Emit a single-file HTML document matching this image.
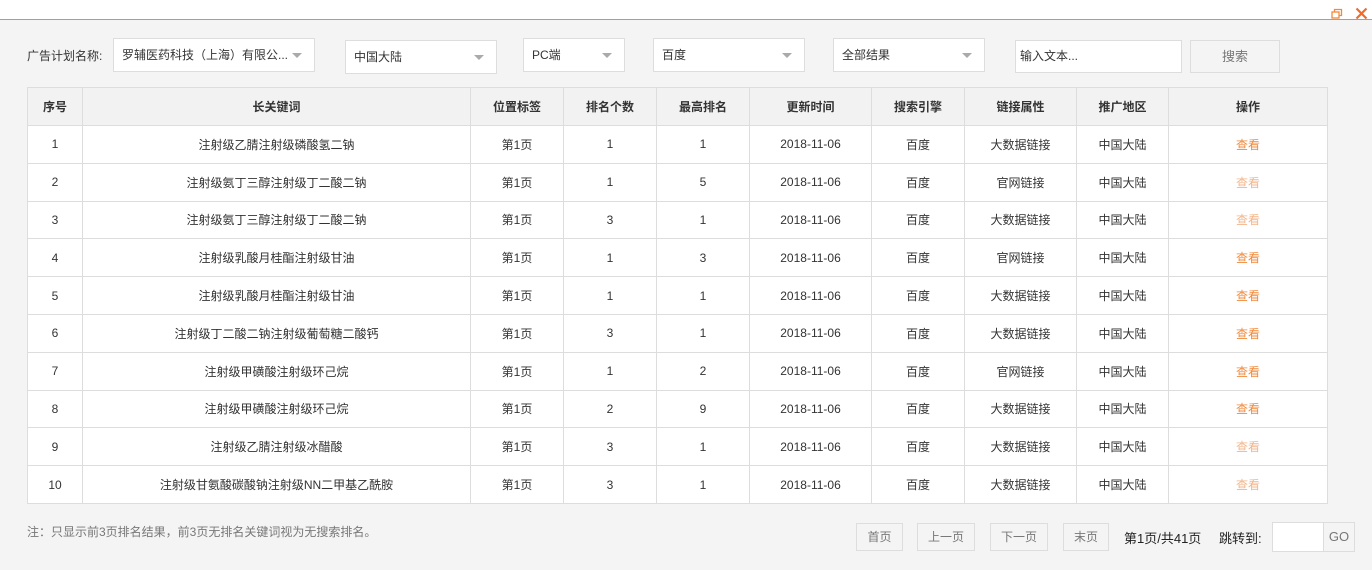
<!DOCTYPE html>
<html><head><meta charset="utf-8"><style>
*{box-sizing:border-box;margin:0;padding:0}
body{width:1372px;height:570px;background:#f4f4f4;font-family:"Liberation Sans","Noto Sans CJK SC",sans-serif;font-size:12px;color:#333;position:relative;overflow:hidden}
.top{position:absolute;left:0;top:0;width:1372px;height:19px;background:#fff}
.line{position:absolute;left:0;top:19px;width:1372px;height:1px;background:#f08a3c}
.abs{position:absolute}
.sel{position:absolute;background:#fff;border:1px solid #ddd;height:34px;line-height:32px;padding-left:8px;font-size:12px;color:#333}
.sel:after{content:"";position:absolute;right:12px;top:14px;border-left:5px solid transparent;border-right:5px solid transparent;border-top:5px solid #aaa}
table{position:absolute;left:27px;top:87px;border-collapse:collapse;background:#fff;width:1301px}
td,th{border:1px solid #ddd;text-align:center;height:37.8px;font-size:12px;font-weight:normal;color:#333;padding:0}
th{background:#f2f2f2;font-weight:bold;height:38px}
.o{color:#f08a3c}.f{color:#f3b58b}
.pb{position:absolute;top:523px;height:28px;line-height:26px;border:1px solid #ddd;text-align:center;color:#777;background:#f4f4f4}
</style></head><body>
<div class="top"></div><div class="line"></div>
<svg class="abs" style="left:1331px;top:8px" width="12" height="12"><rect x="1" y="4" width="7" height="6" fill="none" stroke="#f08a3c" stroke-width="1.3"/><path d="M3.5 4V1.5H10.5V7.5H8" fill="none" stroke="#f08a3c" stroke-width="1.3"/></svg>
<svg class="abs" style="left:1355px;top:7px" width="13" height="13"><path d="M1.5 1.5L11.5 11.5M11.5 1.5L1.5 11.5" stroke="#f06a2c" stroke-width="2.2"/></svg>
<div class="abs" style="left:27px;top:47px">广告计划名称:</div>
<div class="sel" style="left:113px;top:38px;width:202px">罗辅医药科技（上海）有限公...</div>
<div class="sel" style="left:345px;top:40px;width:152px">中国大陆</div>
<div class="sel" style="left:523px;top:38px;width:102px">PC端</div>
<div class="sel" style="left:653px;top:38px;width:152px">百度</div>
<div class="sel" style="left:833px;top:38px;width:152px">全部结果</div>
<div class="abs" style="left:1015px;top:40px;width:167px;height:33px;background:#fff;border:1px solid #ddd;line-height:31px;padding-left:4px">输入文本...</div>
<div class="abs" style="left:1190px;top:40px;width:90px;height:33px;border:1px solid #ddd;line-height:31px;text-align:center;color:#777;font-size:13px">搜索</div>
<table>
<tr><th style="width:55px">序号</th><th style="width:388px">长关键词</th><th style="width:93px">位置标签</th><th style="width:93px">排名个数</th><th style="width:93px">最高排名</th><th style="width:122px">更新时间</th><th style="width:93px">搜索引擎</th><th style="width:112px">链接属性</th><th style="width:92px">推广地区</th><th>操作</th></tr>
<tr><td>1</td><td>注射级乙腈注射级磷酸氢二钠</td><td>第1页</td><td>1</td><td>1</td><td>2018-11-06</td><td>百度</td><td>大数据链接</td><td>中国大陆</td><td class="o">查看</td></tr>
<tr><td>2</td><td>注射级氨丁三醇注射级丁二酸二钠</td><td>第1页</td><td>1</td><td>5</td><td>2018-11-06</td><td>百度</td><td>官网链接</td><td>中国大陆</td><td class="f">查看</td></tr>
<tr><td>3</td><td>注射级氨丁三醇注射级丁二酸二钠</td><td>第1页</td><td>3</td><td>1</td><td>2018-11-06</td><td>百度</td><td>大数据链接</td><td>中国大陆</td><td class="f">查看</td></tr>
<tr><td>4</td><td>注射级乳酸月桂酯注射级甘油</td><td>第1页</td><td>1</td><td>3</td><td>2018-11-06</td><td>百度</td><td>官网链接</td><td>中国大陆</td><td class="o">查看</td></tr>
<tr><td>5</td><td>注射级乳酸月桂酯注射级甘油</td><td>第1页</td><td>1</td><td>1</td><td>2018-11-06</td><td>百度</td><td>大数据链接</td><td>中国大陆</td><td class="o">查看</td></tr>
<tr><td>6</td><td>注射级丁二酸二钠注射级葡萄糖二酸钙</td><td>第1页</td><td>3</td><td>1</td><td>2018-11-06</td><td>百度</td><td>大数据链接</td><td>中国大陆</td><td class="o">查看</td></tr>
<tr><td>7</td><td>注射级甲磺酸注射级环己烷</td><td>第1页</td><td>1</td><td>2</td><td>2018-11-06</td><td>百度</td><td>官网链接</td><td>中国大陆</td><td class="o">查看</td></tr>
<tr><td>8</td><td>注射级甲磺酸注射级环己烷</td><td>第1页</td><td>2</td><td>9</td><td>2018-11-06</td><td>百度</td><td>大数据链接</td><td>中国大陆</td><td class="o">查看</td></tr>
<tr><td>9</td><td>注射级乙腈注射级冰醋酸</td><td>第1页</td><td>3</td><td>1</td><td>2018-11-06</td><td>百度</td><td>大数据链接</td><td>中国大陆</td><td class="f">查看</td></tr>
<tr><td>10</td><td>注射级甘氨酸碳酸钠注射级NN二甲基乙酰胺</td><td>第1页</td><td>3</td><td>1</td><td>2018-11-06</td><td>百度</td><td>大数据链接</td><td>中国大陆</td><td class="f">查看</td></tr>
</table>
<div class="abs" style="left:27px;top:523px;color:#777">注：只显示前3页排名结果，前3页无排名关键词视为无搜索排名。</div>
<div class="pb" style="left:856px;width:47px">首页</div>
<div class="pb" style="left:917px;width:58px">上一页</div>
<div class="pb" style="left:990px;width:58px">下一页</div>
<div class="pb" style="left:1063px;width:46px">末页</div>
<div class="abs" style="left:1124px;top:528px;font-size:13px;color:#222">第1页/共41页</div>
<div class="abs" style="left:1219px;top:528px;font-size:13px;color:#222">跳转到:</div>
<div class="abs" style="left:1272px;top:522px;width:52px;height:30px;background:#fff;border:1px solid #ddd"></div>
<div class="abs" style="left:1323px;top:522px;width:32px;height:30px;border:1px solid #ddd;line-height:28px;text-align:center;color:#777;font-size:13px">GO</div>
</body></html>
